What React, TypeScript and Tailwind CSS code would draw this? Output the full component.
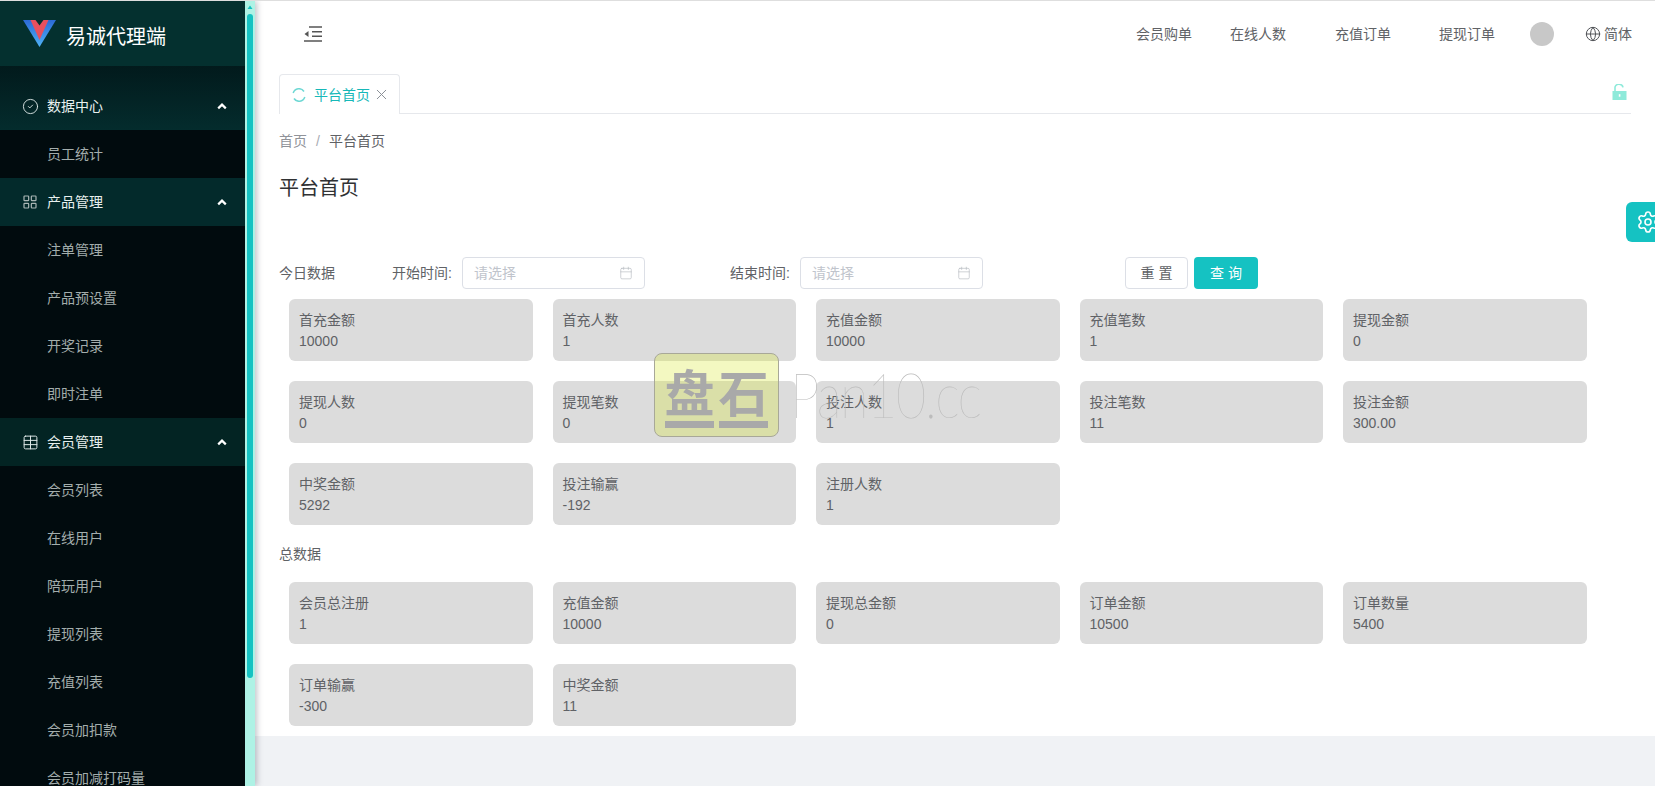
import React from "react";
import { CircleCheck, LayoutGrid, Table, Globe, Calendar, Settings, X } from "lucide-react";

const font = "font-['Liberation_Sans','Noto_Sans_CJK_SC',sans-serif]";

function Chevron() {
  return (
    <svg width="10" height="7" viewBox="0 0 10 7" className="ml-auto mr-[18px]">
      <path d="M1.2 5.4 L5 1.6 L8.8 5.4" fill="none" stroke="#ffffff" strokeWidth="2.2" />
    </svg>
  );
}

function Group({ icon, label }: { icon: React.ReactNode; label: string }) {
  return (
    <div className="flex h-12 items-center pl-[22px] text-sm text-[#e8f0ef]">
      <span className="flex w-[25px] items-center">{icon}</span>
      <span>{label}</span>
      <Chevron />
    </div>
  );
}

function Sub({ label }: { label: string }) {
  return <div className="flex h-12 items-center bg-[#010b0e] pl-[47px] text-sm text-[#a3adac]">{label}</div>;
}

function Card({ label, value }: { label: string; value: string }) {
  return (
    <div className="h-[62px] w-[243.5px] rounded-md bg-[#dcdcdc] px-[10px] pt-[11px] text-sm leading-[21px] text-[#606266]">
      <div>{label}</div>
      <div>{value}</div>
    </div>
  );
}

function DateInput() {
  return (
    <div className="flex h-8 w-[183px] items-center justify-between rounded border border-[#dcdfe6] bg-white pl-[11px] pr-[11px] text-sm text-[#c0c4cc]">
      <span>请选择</span>
      <Calendar size={14} strokeWidth={1.1} className="text-[#b4b8bf]" />
    </div>
  );
}

const today: [string, string][] = [
  ["首充金额", "10000"], ["首充人数", "1"], ["充值金额", "10000"], ["充值笔数", "1"], ["提现金额", "0"],
  ["提现人数", "0"], ["提现笔数", "0"], ["投注人数", "1"], ["投注笔数", "11"], ["投注金额", "300.00"],
  ["中奖金额", "5292"], ["投注输赢", "-192"], ["注册人数", "1"],
];

const total: [string, string][] = [
  ["会员总注册", "1"], ["充值金额", "10000"], ["提现总金额", "0"], ["订单金额", "10500"], ["订单数量", "5400"],
  ["订单输赢", "-300"], ["中奖金额", "11"],
];

function WatermarkGlyph({ char }: { char: string }) {
  return (
    <div className="flex w-[49px] flex-col items-center">
      <span className="h-[60px] font-['Noto_Sans_CJK_SC',sans-serif] text-[50px] font-bold leading-[58px] text-[#a9a9a9]">{char}</span>
      <span className="h-[7px] w-full bg-[#a9a9a9]" />
    </div>
  );
}

export default function App() {
  return (
    <div className={`relative flex h-[786px] w-full overflow-hidden border-t border-[#dedede] bg-[#f0f2f5] ${font}`}>
      <aside className="relative z-10 flex h-full w-[255px] shrink-0 overflow-hidden shadow-[2px_0_6px_rgba(0,21,41,0.25)]">
        <div className="w-[245px] shrink-0 bg-[#010b0e]">
          <div className="flex h-[65px] items-center bg-[#04302f] pl-[23px]">
            <svg width="33" height="27" viewBox="0 0 33 27">
              <defs>
                <linearGradient id="vb" x1="0" y1="0" x2="0" y2="1">
                  <stop offset="0" stopColor="#2c6ad6" />
                  <stop offset="1" stopColor="#4fb2f6" />
                </linearGradient>
              </defs>
              <path d="M0 0 H33 L16.5 27 Z" fill="url(#vb)" />
              <path d="M7.5 0 H25.5 L16.5 20 Z" fill="#e8505e" />
              <path d="M12.5 0 H20.5 L16.5 5.5 Z" fill="#04302f" />
            </svg>
            <span className="ml-[10px] mt-[7px] text-xl text-white">易诚代理端</span>
          </div>
          <div className="bg-gradient-to-b from-[#021a1c] to-[#042c2d] pt-4">
            <Group icon={<CircleCheck size={17} strokeWidth={1.3} className="text-[#dfe9e8]" />} label="数据中心" />
          </div>
          <Sub label="员工统计" />
          <div className="bg-[#032a2b]">
            <Group icon={<LayoutGrid size={16} strokeWidth={1.8} className="text-[#aab6b5]" />} label="产品管理" />
          </div>
          <Sub label="注单管理" />
          <Sub label="产品预设置" />
          <Sub label="开奖记录" />
          <Sub label="即时注单" />
          <div className="bg-[#032423]">
            <Group icon={<Table size={17} strokeWidth={1.4} className="text-[#dfe9e8]" />} label="会员管理" />
          </div>
          <Sub label="会员列表" />
          <Sub label="在线用户" />
          <Sub label="陪玩用户" />
          <Sub label="提现列表" />
          <Sub label="充值列表" />
          <Sub label="会员加扣款" />
          <Sub label="会员加减打码量" />
        </div>
        <div className="flex w-[10px] shrink-0 flex-col bg-[#aef2e5] pl-[2px]">
          <svg width="6" height="13" viewBox="0 0 6 13" className="shrink-0">
            <path d="M3 4.5 L5.5 8 H0.5 Z" fill="#15c2c2" />
          </svg>
          <div className="h-[664px] w-[6px] rounded-[3px] bg-[#15c2c2]" />
        </div>
      </aside>

      <main className="flex min-w-0 flex-1 flex-col">
        <header className="flex h-[65px] shrink-0 items-center bg-white pl-[49px] pr-[23px] text-sm text-[#606266] shadow-[0_1px_6px_rgba(0,21,41,0.14)]">
          <svg width="18" height="16" viewBox="0 0 18 16" className="text-[#555]">
            <path d="M5 1 H18 M8 5.7 H18 M8 10.3 H18 M0 15 H18" stroke="currentColor" strokeWidth="1.6" fill="none" />
            <path d="M4.5 5 L0.5 8 L4.5 11 Z" fill="currentColor" />
          </svg>
          <span className="ml-auto">会员购单</span>
          <span className="ml-[38px]">在线人数</span>
          <span className="ml-[49px]">充值订单</span>
          <span className="ml-[48px]">提现订单</span>
          <span className="ml-[35px] h-6 w-6 rounded-full bg-[#c8c8c8]" />
          <Globe size={16} strokeWidth={1.5} className="ml-[31px] mr-[3px] text-[#505357]" />
          <span>简体</span>
        </header>

        <section className="bg-white px-6 pb-[10px] pt-2">
          <div className="flex h-[40px] items-start justify-between border-b border-[#e6e8ec]">
            <div className="flex h-[40px] w-[121px] items-center rounded-t border border-b-0 border-[#e6e8ec] bg-white pl-[12px] text-sm text-[#17b8b8]">
              <svg width="14" height="14" viewBox="0 0 14 14" fill="none" stroke="#6fd8d4" strokeWidth="1.5">
                <path d="M1.2 5 A6 6 0 0 1 12 3.5" />
                <path d="M12.8 9 A6 6 0 0 1 2 10.5" />
              </svg>
              <span className="ml-[8px]">平台首页</span>
              <X size={17} strokeWidth={1.4} className="ml-[3px] text-[#8a8f96]" />
            </div>
            <svg width="15" height="16" viewBox="0 0 15 16" className="mr-[4px] mt-[10px]">
              <path d="M3 7 V4.2 A4 3.6 0 0 1 11 3.4" fill="none" stroke="#8eeada" strokeWidth="1.6" />
              <rect x="0.5" y="7" width="14" height="9" fill="#8eeada" />
              <rect x="6.8" y="10.2" width="1.6" height="2.5" fill="#ffffff" />
            </svg>
          </div>
          <div className="mt-[17px] text-sm leading-[20px]">
            <span className="text-[#909399]">首页</span>
            <span className="mx-[9px] text-[#a8abb2]">/</span>
            <span className="text-[#606266]">平台首页</span>
          </div>
          <h1 className="mt-[23px] text-xl font-normal leading-[28px] text-[#303133]">平台首页</h1>

          <div className="mt-[55px] flex h-8 items-center text-sm text-[#606266]">
            <span className="w-[113px]">今日数据</span>
            <span className="w-[70px]">开始时间:</span>
            <DateInput />
            <span className="ml-[85px] w-[70px]">结束时间:</span>
            <DateInput />
            <button className="ml-[142px] h-8 w-[63px] rounded border border-[#dcdfe6] bg-white pl-[4px] text-sm tracking-[4px] text-[#606266]">重置</button>
            <button className="ml-[6px] h-8 w-[64px] rounded bg-[#15c2c2] pl-[4px] text-sm tracking-[4px] text-white">查询</button>
          </div>

          <div className="ml-[10px] mt-[10px] grid grid-cols-[repeat(5,243.5px)] gap-x-[20px] gap-y-5">
            {today.map(([l, v], i) => (
              <Card key={i} label={l} value={v} />
            ))}
          </div>
          <div className="mt-[19px] text-sm leading-[20px] text-[#606266]">总数据</div>
          <div className="ml-[10px] mt-[18px] grid grid-cols-[repeat(5,243.5px)] gap-x-[20px] gap-y-5">
            {total.map(([l, v], i) => (
              <Card key={i} label={l} value={v} />
            ))}
          </div>
        </section>
      </main>

      <div className="absolute left-[654px] top-[352px] z-20 flex h-[84px] w-[125px] items-end justify-center gap-[5px] rounded-lg border border-[#a8a898] bg-[#d8e833]/30 pb-[8px]">
        <WatermarkGlyph char="盘" />
        <WatermarkGlyph char="石" />
      </div>
      <div className="absolute left-[790px] top-[362px] z-20 origin-left scale-x-[0.85] font-['Lato',sans-serif] text-[62px] font-thin leading-none tracking-[-2px] text-[#bcbcbc]">Pan10.cc</div>

      <div className="absolute left-[1626px] top-[201px] z-20 flex h-[40px] w-[29px] items-center overflow-hidden rounded-l-md bg-[#15c2c2] pl-[10px]">
        <Settings size={24} strokeWidth={1.6} className="shrink-0 text-white" />
      </div>
    </div>
  );
}
